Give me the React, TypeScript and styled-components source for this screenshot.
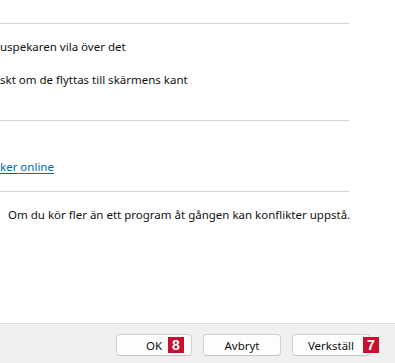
import styled, { createGlobalStyle } from "styled-components";

const GlobalStyle = createGlobalStyle`
    html, body {
        margin: 0;
        padding: 0;
        background: #ffffff;
    }
    body {
        font-family: "Noto Sans", "Open Sans", sans-serif;
        font-size: 11.5px;
        color: #111111;
    }
`;

const Page = styled.div`
    height: 100vh;
    display: flex;
    flex-direction: column;
    overflow: hidden;
`;

const Content = styled.div`
    flex: 1;
    width: 349px;
    padding-top: 23px;
`;

const Divider = styled.div<{ $top?: number }>`
    height: 1px;
    margin-top: ${p => p.$top ?? 0}px;
    background: #d4d4d4;
`;

const Line = styled.div<{ $top: number; $indent?: number }>`
    margin-top: ${p => p.$top}px;
    padding-left: ${p => p.$indent ?? 0}px;
    line-height: 16px;
    white-space: nowrap;
`;

const OnlineLink = styled.a`
    color: #0067c0;
    text-decoration: underline;
    text-underline-offset: 2px;
    cursor: pointer;
`;

const Footer = styled.div`
    height: 40px;
    border-top: 1px solid #dcdcdc;
    background: #f0f0f0;
    display: flex;
    justify-content: flex-end;
    align-items: flex-start;
    gap: 11px;
    padding: 10px 25px 0 0;
    box-sizing: border-box;
`;

const Button = styled.button<{ $width: number }>`
    position: relative;
    width: ${p => p.$width}px;
    height: 22px;
    box-sizing: border-box;
    border: 1px solid #d0d0d0;
    border-bottom-color: #c2c2c2;
    border-radius: 4px;
    background: #fdfdfd;
    font-family: inherit;
    font-size: 11.5px;
    color: #111111;
    padding: 0;
`;

const Badge = styled.span<{ $right: number }>`
    position: absolute;
    top: 2px;
    right: ${p => p.$right}px;
    width: 16px;
    height: 16px;
    background: #c8102e;
    color: #ffffff;
    font-family: "Liberation Sans", Arial, sans-serif;
    font-weight: bold;
    font-size: 14px;
    line-height: 16px;
    text-align: center;
`;

export default function App() {
    return (
        <Page>
            <GlobalStyle />
            <Content>
                <Divider />
                <Line $top={15}>uspekaren vila över det</Line>
                <Line $top={17}>skt om de flyttas till skärmens kant</Line>
                <Divider $top={32} />
                <Line $top={38}>
                    <OnlineLink>ker online</OnlineLink>
                </Line>
                <Divider $top={16} />
                <Line $top={15} $indent={8}>
                    Om du kör fler än ett program åt gången kan konflikter uppstå.
                </Line>
            </Content>
            <Footer>
                <Button $width={76}>
                    OK
                    <Badge $right={7}>8</Badge>
                </Button>
                <Button $width={78}>Avbryt</Button>
                <Button $width={78}>
                    Verkställ
                    <Badge $right={-10}>7</Badge>
                </Button>
            </Footer>
        </Page>
    );
}
